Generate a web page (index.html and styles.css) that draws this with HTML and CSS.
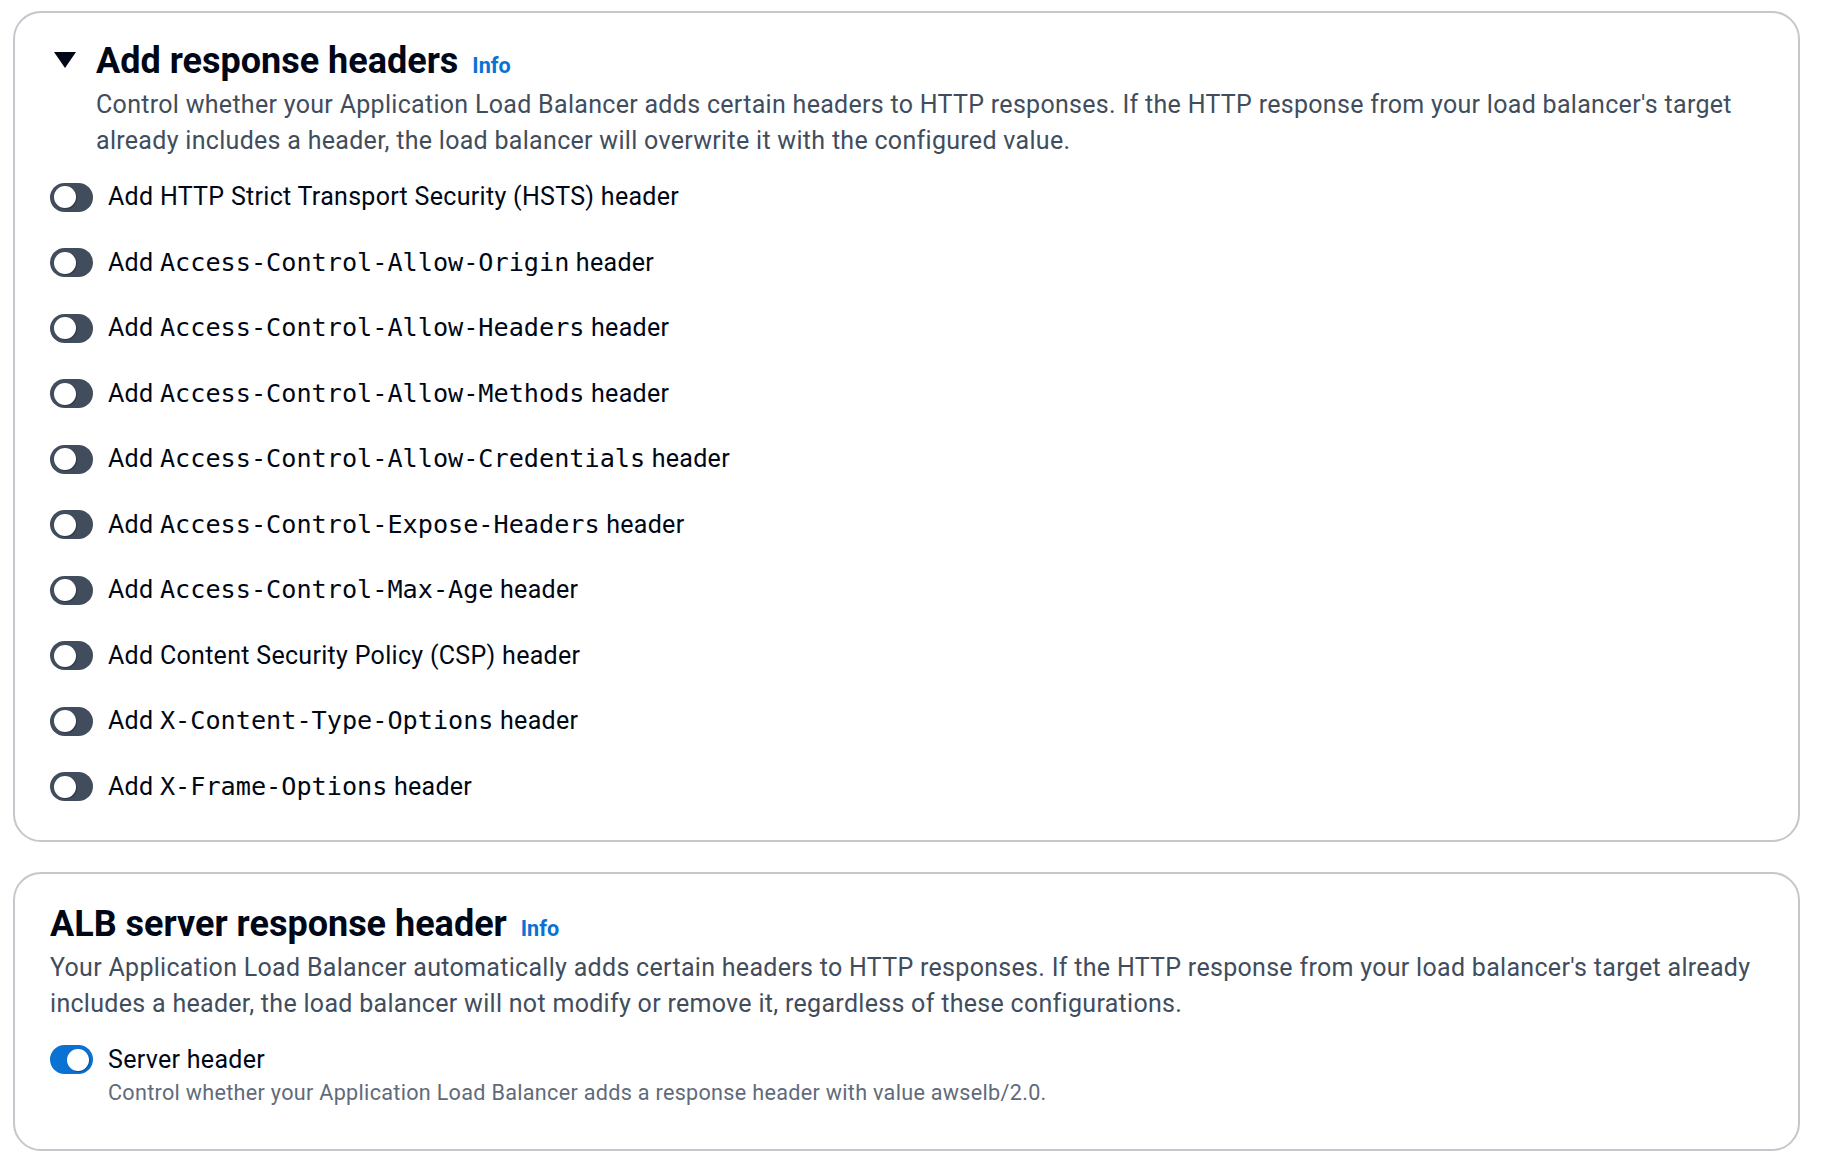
FILE: index.html
```html
<!DOCTYPE html>
<html lang="en">
<head>
<meta charset="utf-8">
<title>Response headers</title>
<link rel="stylesheet" href="styles.css">
</head>
<body>
<div class="page">
  <section class="card card-headers">
    <div class="card-head">
      <span class="caret">
        <svg width="22" height="16" viewBox="0 0 22 16"><polygon points="0,0 22,0 11,16" fill="#000716"/></svg>
      </span>
      <div class="head-text">
        <h2 class="title">Add response headers<a class="info" href="#">Info</a></h2>
        <p class="desc">Control whether your Application Load Balancer adds certain headers to HTTP responses. If the HTTP response from your load balancer's target already includes a header, the load balancer will overwrite it with the configured value.</p>
      </div>
    </div>
    <ul class="toggles">
      <li class="row"><span class="toggle"><span class="knob"></span></span><span class="label">Add HTTP Strict Transport Security (HSTS) header</span></li>
      <li class="row"><span class="toggle"><span class="knob"></span></span><span class="label">Add <code>Access-Control-Allow-Origin</code> header</span></li>
      <li class="row"><span class="toggle"><span class="knob"></span></span><span class="label">Add <code>Access-Control-Allow-Headers</code> header</span></li>
      <li class="row"><span class="toggle"><span class="knob"></span></span><span class="label">Add <code>Access-Control-Allow-Methods</code> header</span></li>
      <li class="row"><span class="toggle"><span class="knob"></span></span><span class="label">Add <code>Access-Control-Allow-Credentials</code> header</span></li>
      <li class="row"><span class="toggle"><span class="knob"></span></span><span class="label">Add <code>Access-Control-Expose-Headers</code> header</span></li>
      <li class="row"><span class="toggle"><span class="knob"></span></span><span class="label">Add <code>Access-Control-Max-Age</code> header</span></li>
      <li class="row"><span class="toggle"><span class="knob"></span></span><span class="label">Add Content Security Policy (CSP) header</span></li>
      <li class="row"><span class="toggle"><span class="knob"></span></span><span class="label">Add <code>X-Content-Type-Options</code> header</span></li>
      <li class="row"><span class="toggle"><span class="knob"></span></span><span class="label">Add <code>X-Frame-Options</code> header</span></li>
    </ul>
  </section>

  <section class="card card-alb">
    <h2 class="title">ALB server response header<a class="info" href="#">Info</a></h2>
    <p class="desc">Your Application Load Balancer automatically adds certain headers to HTTP responses. If the HTTP response from your load balancer's target already includes a header, the load balancer will not modify or remove it, regardless of these configurations.</p>
    <div class="server">
      <div class="row"><span class="toggle on"><span class="knob"></span></span><span class="label">Server header</span></div>
      <p class="sub">Control whether your Application Load Balancer adds a response header with value awselb/2.0.</p>
    </div>
  </section>
</div>
</body>
</html>
```

FILE: styles.css
```css
html, body {
  margin: 0;
  background: #ffffff;
}

body {
  font-family: Roboto, "Liberation Sans", Arial, sans-serif;
  color: #000716;
}

.page {
  padding: 11px 30px 18px 13px;
  display: flex;
  flex-direction: column;
  gap: 30px;
}

.card {
  border: 2px solid #c6c6cd;
  border-radius: 28px;
  background: #ffffff;
}

.card-headers {
  padding: 27px 35px 35px 35px;
}

.card-alb {
  padding: 29px 35px 42px 35px;
}

.card-head {
  display: flex;
}

.caret {
  flex: none;
  width: 46px;
  padding-top: 12px;
  padding-left: 4px;
  box-sizing: border-box;
}

.caret svg {
  display: block;
}

.head-text {
  flex: 1;
  min-width: 0;
}

.title {
  margin: 0;
  font-size: 36px;
  line-height: 43px;
  font-weight: 700;
  color: #000716;
}

.info {
  margin-left: 14px;
  font-size: 21.6px;
  font-weight: 700;
  color: #0972d3;
  text-decoration: none;
}

.desc {
  margin: 0;
  font-size: 25px;
  line-height: 36px;
  letter-spacing: 0.3px;
  color: #414d5c;
}

.toggles {
  list-style: none;
  margin: 20px 0 0 0;
  padding: 0;
  display: flex;
  flex-direction: column;
  gap: 29.5px;
}

.row {
  display: flex;
  align-items: center;
  gap: 15px;
  height: 36px;
}

.toggle {
  position: relative;
  flex: none;
  width: 43px;
  height: 29px;
  border-radius: 15px;
  background: #414d5c;
}

.knob {
  position: absolute;
  top: 3.5px;
  left: 4px;
  width: 22px;
  height: 22px;
  border-radius: 50%;
  background: #ffffff;
  box-shadow: 1px 1px 1px rgba(0, 7, 22, 0.3);
}

.toggle.on {
  background: #0972d3;
}

.toggle.on .knob {
  left: auto;
  right: 4px;
}

.label {
  font-size: 25px;
  line-height: 36px;
  letter-spacing: 0.3px;
  color: #000716;
  white-space: nowrap;
}

code {
  font-family: "DejaVu Sans Mono", "Liberation Mono", monospace;
  font-size: 25.2px;
  letter-spacing: 0;
}

.server {
  margin-top: 20px;
}

.sub {
  margin: 0 0 0 58px;
  font-size: 21.6px;
  line-height: 29px;
  letter-spacing: 0.3px;
  color: #5f6b7a;
}
```
